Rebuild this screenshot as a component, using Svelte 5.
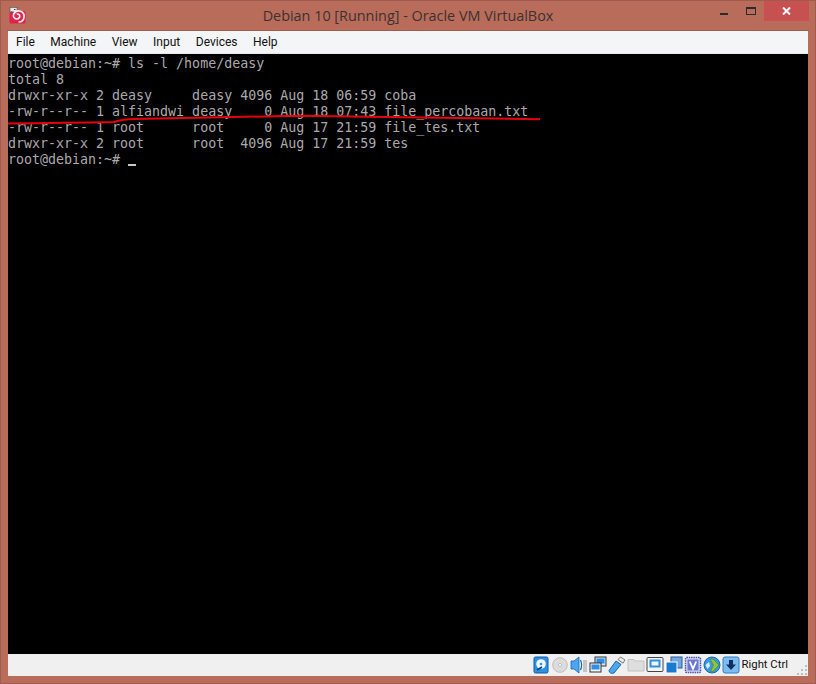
<script>
  const lines = [
    'root@debian:~# ls -l /home/deasy',
    'total 8',
    'drwxr-xr-x 2 deasy     deasy 4096 Aug 18 06:59 coba',
    '-rw-r--r-- 1 alfiandwi deasy    0 Aug 18 07:43 file_percobaan.txt',
    '-rw-r--r-- 1 root      root     0 Aug 17 21:59 file_tes.txt',
    'drwxr-xr-x 2 root      root  4096 Aug 17 21:59 tes'
  ];
  const menus = ['File', 'Machine', 'View', 'Input', 'Devices', 'Help'];
</script>

<div class="window">
  <header class="titlebar">
    <svg class="appicon" viewBox="0 0 17 17">
      <rect x="0.5" y="4" width="16" height="12.500" rx="1.500" fill="#e0234e" />
      <rect x="1" y="0.500" width="7" height="4.500" fill="#e8e8e8" stroke="#555" stroke-width="0.600" />
      <path d="M2 5h1.500M5 2.500h1.500" stroke="#444" />
      <path d="M9.500 15a5.500 5.500 0 1 0-4.800-8c-1 2.500.5 5 3 5s3.300-2 3-3.300-1.800-2.200-3-1.400" fill="none" stroke="#f7f0f2" stroke-width="1.700" />
    </svg>
    <h1>Debian 10 [Running] - Oracle VM VirtualBox</h1>
    <div class="controls">
      <span class="min"></span>
      <span class="max"></span>
      <span class="close">
        <svg viewBox="0 0 9 8" width="9" height="8"><path d="M1 0.500 8 7.500M8 0.500 1 7.500" stroke="#fff" stroke-width="2" /></svg>
      </span>
    </div>
  </header>

  <nav class="menubar">
    {#each menus as m}
      <span>{m}</span>
    {/each}
  </nav>

  <main class="screen">
    <pre>{lines.join('\n')}
root@debian:~# <span class="cursor"></span></pre>
    <svg class="scribble" viewBox="0 0 800 600" width="800" height="600">
      <path d="M-2 69.500 Q60 69 106 68 C112 66 116 65 126 65 L290 61.800 L532 65.300" />
    </svg>
  </main>

  <footer class="statusbar">
    <div class="icons">
      <!-- hard disk -->
      <svg viewBox="0 0 16 18"><rect x="1" y="1" width="14" height="16" rx="1.500" fill="#2f8fe0" stroke="#0f5aa8" /><circle cx="8" cy="8" r="4.800" fill="#eef6fc" /><circle cx="8" cy="8" r="1.300" fill="#2f8fe0" /><path d="M4 14l5-3" stroke="#0b3f7d" stroke-width="1.500" /></svg>
      <!-- optical disk, inactive -->
      <svg viewBox="0 0 16 18"><circle cx="8" cy="9" r="7.300" fill="#dcdcdc" stroke="#bdbdbd" /><circle cx="8" cy="9" r="1.600" fill="#f3f3f3" stroke="#b5b5b5" stroke-width="0.700" /></svg>
      <!-- audio -->
      <svg viewBox="0 0 18 18"><path d="M1 5h3l5-4v16l-5-4H1z" fill="#4ba6ec" stroke="#1667b3" stroke-width="0.800" /><path d="M10.500 4c1.300 3 1.300 7 0 10" fill="none" stroke="#1667b3" stroke-width="1.200" /><path d="M13 5h4M13 7h4M13 9h4M13 11h4M13 13h4M13 15h4" stroke="#9a9a9a" /></svg>
      <!-- network -->
      <svg viewBox="0 0 18 18"><rect x="6" y="1" width="11" height="9" fill="#cfe6f8" stroke="#333" /><rect x="7.500" y="2.500" width="8" height="5" fill="#2f8fe0" /><rect x="1" y="7" width="11" height="9" fill="#eef6fc" stroke="#333" /><rect x="2.500" y="8.500" width="8" height="5" fill="#2f8fe0" /></svg>
      <!-- usb -->
      <svg viewBox="0 0 18 18"><path d="M1 14.500 8 5l5 3.500L6 17c-2 1-5 0-5-2.500z" fill="#4ba6ec" stroke="#1667b3" /><path d="M10 3.500 12.500 1 17 4l-2 3.200z" fill="#eee" stroke="#777" /></svg>
      <!-- shared folder, inactive -->
      <svg viewBox="0 0 18 18"><path d="M1 5V3.500h6l1 1.500h9v10H1z" fill="#dedede" stroke="#c0c0c0" /></svg>
      <!-- display -->
      <svg viewBox="0 0 18 18"><rect x="1" y="1.500" width="16" height="14" rx="1" fill="#f5f5f5" stroke="#444" /><rect x="3.500" y="3.500" width="11" height="8" fill="#2f8fe0" /><rect x="5.500" y="5.500" width="7" height="4" fill="#f5f5f5" /></svg>
      <!-- recording -->
      <svg viewBox="0 0 18 18"><rect x="6" y="1" width="11" height="11" fill="#6fa8e0" stroke="#30598c" /><rect x="1" y="6" width="11" height="11" fill="#1b79d0" stroke="#fff" /></svg>
      <!-- vt-x chip -->
      <svg viewBox="0 0 18 18"><rect x="1.500" y="1.500" width="15" height="15" rx="1" fill="#d6d9f2" stroke="#4a55a8" stroke-dasharray="1.500 0.800" stroke-width="1.500" /><rect x="3.500" y="3.500" width="11" height="11" fill="#6a78d0" /><path d="M5.800 5.500 9 12.800 12.200 5.500" fill="none" stroke="#fff" stroke-width="1.800" /></svg>
      <!-- guest additions globe -->
      <svg viewBox="0 0 18 18"><circle cx="9" cy="9" r="8" fill="#3a98e4" stroke="#1667b3" /><path d="M7 3h3l6 6-6 6.500H7.500l3-6.500z" fill="#8cc63f" stroke="#4f8a1a" stroke-width="0.700" /><path d="M2.500 9 6 6l1 4-2.500 3z" fill="#d8ecfa" /></svg>
      <!-- host key capture -->
      <svg viewBox="0 0 18 18"><rect x="1" y="1" width="16" height="16" rx="2" fill="#7dbcf0" stroke="#2f7fc8" /><path d="M7 4h4v4.500h3L9 14 4 8.500h3z" fill="#10315e" /></svg>
    </div>
    <span class="hostkey">Right Ctrl</span>
    <svg class="grip" viewBox="0 0 11 11" width="11" height="11">
      <g fill="#bdbdbd">
        <rect x="8" y="0" width="2" height="2" /><rect x="4" y="4" width="2" height="2" /><rect x="8" y="4" width="2" height="2" />
        <rect x="0" y="8" width="2" height="2" /><rect x="4" y="8" width="2" height="2" /><rect x="8" y="8" width="2" height="2" />
      </g>
    </svg>
  </footer>
</div>

<style>
  :global(body) {
    background: #b96c5a;
  }

  .window {
    display: flex;
    flex-direction: column;
    box-sizing: border-box;
    width: 816px;
    height: 684px;
    padding: 0 8px 8px;
    background: #b96c5a;
    box-shadow: inset 0 0 0 1px #9d5c4d;
    overflow: hidden;
  }

  .titlebar {
    position: relative;
    display: flex;
    flex: none;
    align-items: flex-start;
    justify-content: center;
    height: 30px;
    border-bottom: 1px solid #9d5c4d;
    margin: 0 -1px 0 -1px;
  }

  .appicon {
    position: absolute;
    left: 2px;
    top: 7px;
    width: 17px;
    height: 17px;
  }

  h1 {
    margin: 6px 0 0;
    color: #3b3230;
    font: 400 14.4px/20px "Open Sans", sans-serif;
  }

  .controls {
    position: absolute;
    top: 1px;
    right: 0;
    display: flex;
    align-items: flex-start;
    height: 20px;
  }

  .min {
    width: 8px;
    height: 2px;
    margin: 12px 18px 0 0;
    background: #2b2b2b;
  }

  .max {
    box-sizing: border-box;
    width: 10px;
    height: 8px;
    margin: 6px 8px 0 0;
    border: 1px solid #2b2b2b;
    border-top-width: 2px;
  }

  .close {
    display: flex;
    align-items: center;
    justify-content: center;
    width: 45px;
    height: 20px;
    background: #c75050;
  }

  .menubar {
    display: flex;
    flex: none;
    align-items: center;
    box-sizing: border-box;
    gap: 15.5px;
    height: 23px;
    padding: 0 0 0 8px;
    background: #f4f5f7;
    border-bottom: 1px solid #e6e7e9;
    color: #111;
    font: 12px/16px "Roboto", sans-serif;
  }

  .screen {
    position: relative;
    flex: none;
    height: 600px;
    background: #000;
    overflow: hidden;
  }

  pre {
    margin: 0;
    padding-top: 2px;
    color: #aaa;
    font: 13.3px/16px "DejaVu Sans Mono", monospace;
  }

  .cursor {
    display: inline-block;
    width: 8px;
    height: 2px;
    vertical-align: -2px;
    background: #c8c8c8;
  }

  .scribble {
    position: absolute;
    left: 0;
    top: 0;
  }

  .scribble path {
    fill: none;
    stroke: #e8000b;
    stroke-width: 2;
  }

  .statusbar {
    display: flex;
    flex: 1;
    align-items: center;
    justify-content: flex-end;
    background: #f0f0f0;
    color: #111;
    font: 11.3px/16px "Roboto", sans-serif;
  }

  .icons {
    display: flex;
    align-items: center;
    gap: 1px;
  }

  .icons svg {
    width: 18px;
    height: 18px;
  }

  .hostkey {
    margin: 0 9px 0 2px;
  }

  .grip {
    align-self: flex-end;
  }
</style>
